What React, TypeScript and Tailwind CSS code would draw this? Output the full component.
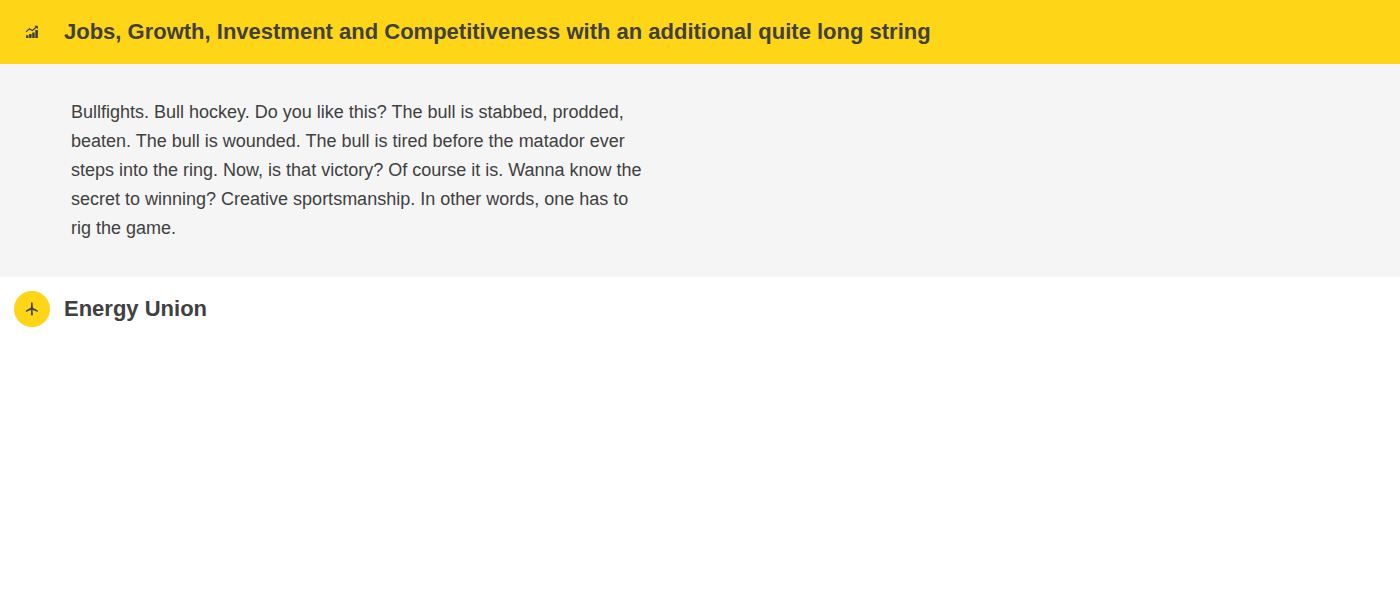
import { useState } from "react";

function ChartIcon() {
  return (
    <svg viewBox="0 0 14 14" className="size-3.5" fill="#404040" aria-hidden="true">
      <path d="M1 10.2h2.5V13H1zM4.1 9h2.5v4H4.1zM7.2 7.4h2.5V13H7.2zM10.3 5h2.6v8h-2.6z" />
      <path
        d="M1 6.9 4.4 3.7 7.4 5.5 11.4 2"
        fill="none"
        stroke="#404040"
        strokeWidth="1.3"
      />
      <path d="M9.4.8h3.4v3.4z" />
    </svg>
  );
}

function TurbineIcon() {
  return (
    <svg viewBox="0 0 14 14" className="size-3.5" fill="#404040" aria-hidden="true">
      <path d="M6.1 1C6.2.1 7.6.1 7.6 1L7.9 6.4H5.8z" />
      <path d="M5.8 5.7.9 8.6c-.5.5-.1 1.3.6 1.1L7 7.6z" />
      <path d="M7.9 5.7 12.8 8.6c.5.5.1 1.3-.6 1.1L6.7 7.6z" />
      <circle cx="6.9" cy="6.7" r="1.2" />
      <path d="M6.2 7.9h1.4L7.9 13.2H5.9z" />
    </svg>
  );
}

const sections = [
  {
    id: "jobs",
    title: "Jobs, Growth, Investment and Competitiveness with an additional quite long string",
    Icon: ChartIcon,
    body: "Bullfights. Bull hockey. Do you like this? The bull is stabbed, prodded, beaten. The bull is wounded. The bull is tired before the matador ever steps into the ring. Now, is that victory? Of course it is. Wanna know the secret to winning? Creative sportsmanship. In other words, one has to rig the game.",
  },
  {
    id: "energy",
    title: "Energy Union",
    Icon: TurbineIcon,
    body: "",
  },
];

export default function App() {
  const [open, setOpen] = useState("jobs");
  return (
    <main className="font-['Liberation_Sans',Arial,sans-serif] text-[#404040]">
      {sections.map(({ id, title, Icon, body }) => {
        const active = open === id;
        return (
          <section key={id}>
            <h2>
              <button
                type="button"
                aria-expanded={active}
                onClick={() => setOpen(active ? "" : id)}
                className={`flex w-full items-center gap-3.5 p-3.5 text-left text-[22px] leading-9 font-bold ${active ? "bg-[#ffd617]" : "bg-white"}`}
              >
                <span className="flex size-9 shrink-0 items-center justify-center rounded-full bg-[#ffd617]">
                  <Icon />
                </span>
                <span>{title}</span>
              </button>
            </h2>
            {active && body && (
              <div className="bg-[#f5f5f5] px-[71px] py-[34px]">
                <p className="max-w-[576px] text-lg leading-[29px]">{body}</p>
              </div>
            )}
          </section>
        );
      })}
    </main>
  );
}
